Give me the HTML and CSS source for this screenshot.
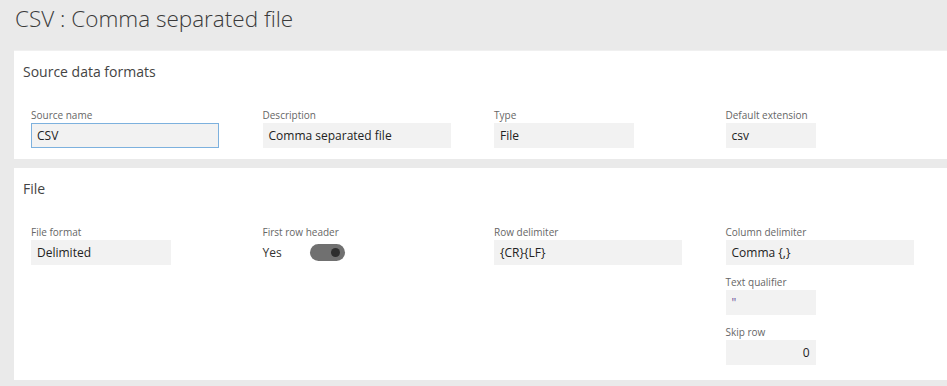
FILE: index.html
```html
<!DOCTYPE html>
<html>

<head>
    <meta charset="UTF-8">
    <link rel="stylesheet" href="styles.css">
    <title>CSV : Comma separated file</title>
</head>

<body>
    <h1 class="page-title">CSV : Comma separated file</h1>

    <div class="panel panel-source">
        <h2>Source data formats</h2>
        <div class="fields">
            <div class="field">
                <label>Source name</label>
                <div class="input wide focused">CSV</div>
            </div>
            <div class="field">
                <label>Description</label>
                <div class="input wide">Comma separated file</div>
            </div>
            <div class="field">
                <label>Type</label>
                <div class="input medium">File</div>
            </div>
            <div class="field">
                <label>Default extension</label>
                <div class="input small">csv</div>
            </div>
        </div>
    </div>

    <div class="panel panel-file">
        <h2>File</h2>
        <div class="fields">
            <div class="field">
                <label>File format</label>
                <div class="input medium">Delimited</div>
            </div>
            <div class="field">
                <label>First row header</label>
                <div class="toggle-row">
                    <span class="toggle-text">Yes</span>
                    <span class="toggle"><span class="knob"></span></span>
                </div>
            </div>
            <div class="field">
                <label>Row delimiter</label>
                <div class="input wide">{CR}{LF}</div>
            </div>
            <div class="column">
                <div class="field">
                    <label>Column delimiter</label>
                    <div class="input wide">Comma {,}</div>
                </div>
                <div class="field">
                    <label>Text qualifier</label>
                    <div class="input small quote">"</div>
                </div>
                <div class="field">
                    <label>Skip row</label>
                    <div class="input small number">0</div>
                </div>
            </div>
        </div>
    </div>
</body>

</html>
```

FILE: styles.css
```css
* {
    box-sizing: border-box;
}

body {
    margin: 0;
    background: #eaeaea;
    font-family: "Open Sans", "Noto Sans", sans-serif;
    color: #333;
    overflow: hidden;
}

.page-title {
    margin: 0;
    height: 50px;
    padding: 3px 0 0 15px;
    font-size: 22.5px;
    font-weight: 300;
    line-height: 32px;
    color: #3a3a3a;
}

.panel {
    margin-left: 14px;
    background: #fff;
    padding: 11px 0 0 9px;
}

.panel-source {
    height: 109px;
    border-top: 1px solid #f0f0f0;
}

.panel-file {
    margin-top: 9px;
    height: 212px;
}

.panel h2 {
    margin: 0 0 26px;
    font-size: 14px;
    font-weight: 400;
    line-height: 20px;
    color: #444;
}

.fields {
    display: grid;
    grid-template-columns: repeat(4, 231.5px);
    padding-left: 8px;
    align-items: start;
}

.field {
    margin-bottom: 10px;
}

.field label {
    display: block;
    font-size: 10px;
    line-height: 14px;
    margin-bottom: 1px;
    color: #666;
}

.input {
    height: 25px;
    background: #f2f2f2;
    font-size: 12px;
    line-height: 25px;
    padding: 0 6px;
    color: #222;
}

.input.wide {
    width: 188px;
}

.input.medium {
    width: 140px;
}

.input.small {
    width: 90px;
}

.input.focused {
    border: 1px solid #7db1de;
    line-height: 23px;
    padding: 0 5px;
}

.input.quote {
    color: #6a4f9a;
}

.input.number {
    text-align: right;
}

.toggle-row {
    display: flex;
    align-items: center;
    height: 25px;
    font-size: 12px;
}

.toggle-text {
    width: 47px;
}

.toggle {
    width: 35px;
    height: 17px;
    border-radius: 9px;
    background: #707070;
    display: flex;
    align-items: center;
    justify-content: flex-end;
    padding-right: 5px;
}

.knob {
    width: 9px;
    height: 9px;
    border-radius: 50%;
    background: #2e2e2e;
}
```
